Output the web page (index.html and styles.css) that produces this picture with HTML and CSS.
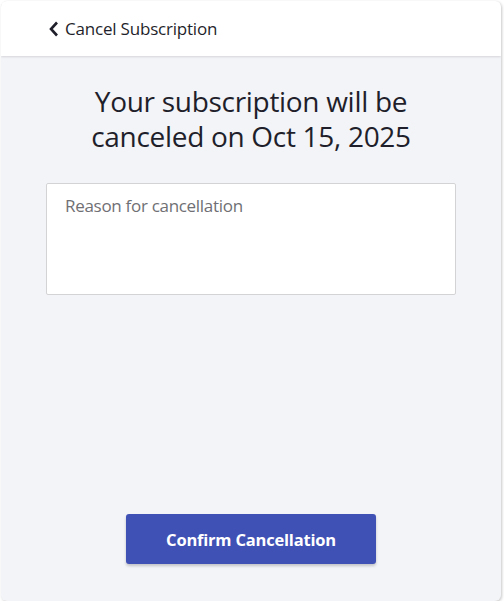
FILE: index.html
```html
<!DOCTYPE html>
<html>
<head>
<meta charset="utf-8">
<link rel="stylesheet" href="styles.css">
</head>
<body>
<div class="card">
  <header class="topbar">
    <svg class="back" width="10" height="16" viewBox="0 0 10 16"><path d="M8 1.5 L2 8 L8 14.5" fill="none" stroke="#1f1f2b" stroke-width="2.6" stroke-linecap="butt"/></svg>
    <span class="topbar-title">Cancel Subscription</span>
  </header>
  <main class="content">
    <h1 class="headline">Your subscription will be<br>canceled on Oct 15, 2025</h1>
    <textarea class="reason" placeholder="Reason for cancellation"></textarea>
    <div class="spacer"></div>
    <button class="confirm">Confirm Cancellation</button>
  </main>
</div>
</body>
</html>
```

FILE: styles.css
```css
html, body {
  margin: 0;
  padding: 0;
  background: #ffffff;
}
body {
  font-family: "Open Sans", "Noto Sans", "Liberation Sans", sans-serif;
  color: #1f1f2b;
}
.card {
  margin: 1px 0 0 1px;
  width: 500px;
  height: 600px;
  border-radius: 6px;
  background: #f3f4f8;
  box-shadow: 1px 1px 3px rgba(0,0,0,0.22);
  overflow: hidden;
  display: flex;
  flex-direction: column;
}
.topbar {
  height: 55px;
  background: #ffffff;
  display: flex;
  align-items: center;
  padding-left: 48px;
  box-shadow: 0 1px 2px rgba(0,0,0,0.12);
  position: relative;
  z-index: 1;
}
.back {
  margin-right: 6px;
  margin-top: 0;
}
.topbar-title {
  font-size: 17px;
  letter-spacing: -0.2px;
  margin-top: -1px;
}
.content {
  flex: 1;
  display: flex;
  flex-direction: column;
  align-items: center;
  padding-top: 28px;
  padding-bottom: 37px;
}
.headline {
  margin: 0;
  font-weight: 400;
  font-size: 28px;
  line-height: 35px;
  text-align: center;
  letter-spacing: -0.3px;
}
.reason {
  margin-top: 29px;
  width: 410px;
  height: 112px;
  box-sizing: border-box;
  border: 1px solid #d3d3d6;
  border-radius: 2px;
  background: #fff;
  padding: 10px 18px;
  font-family: inherit;
  font-size: 17px;
  resize: none;
  outline: none;
  letter-spacing: -0.3px;
}
.reason::placeholder {
  color: #6f6f74;
}
.spacer {
  flex: 1;
}
.confirm {
  width: 250px;
  height: 50px;
  border: none;
  border-radius: 3px;
  background: #3f51b5;
  color: #fff;
  font-family: inherit;
  font-weight: 700;
  font-size: 16.5px;
  letter-spacing: -0.2px;
  box-shadow: 0 2px 3px rgba(0,0,0,0.2);
}
```
